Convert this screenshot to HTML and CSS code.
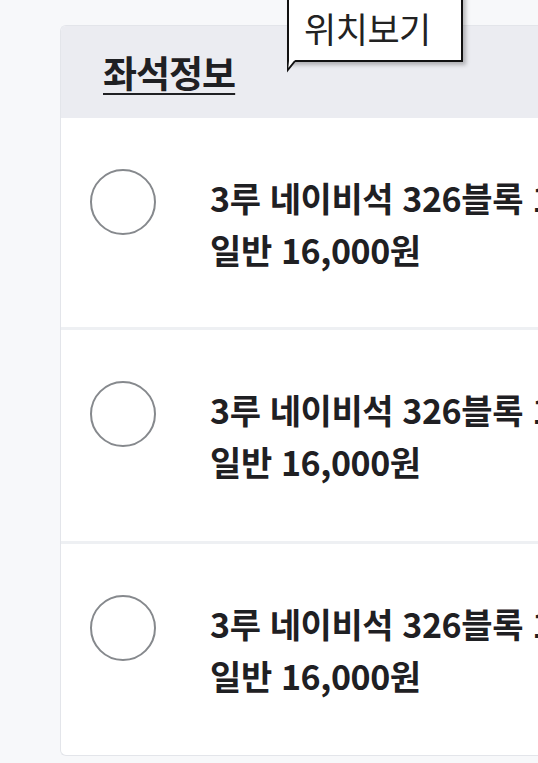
FILE: index.html
```html
<!DOCTYPE html>
<html lang="ko">
<head>
<meta charset="utf-8">
<link rel="stylesheet" href="styles.css">
</head>
<body>
<div class="page">
  <div class="card">
    <div class="card-head">
      <h2 class="title">좌석정보</h2>
    </div>
    <div class="row">
      <span class="radio"></span>
      <div class="info">
        <div class="line">3루 네이비석 326블록 1열 12번</div>
        <div class="line">일반 16,000원</div>
      </div>
    </div>
    <div class="row">
      <span class="radio"></span>
      <div class="info">
        <div class="line">3루 네이비석 326블록 1열 13번</div>
        <div class="line">일반 16,000원</div>
      </div>
    </div>
    <div class="row">
      <span class="radio"></span>
      <div class="info">
        <div class="line">3루 네이비석 326블록 1열 14번</div>
        <div class="line">일반 16,000원</div>
      </div>
    </div>
  </div>
  <div class="tooltip">
    위치보기
    <svg class="tail" width="12" height="14" viewBox="0 0 12 14">
      <polygon points="1,0 9,0 0,12" fill="#fff"/>
      <polyline points="1,0 1,2 0,12 8,2" fill="none" stroke="#111" stroke-width="2"/>
    </svg>
  </div>
</div>
</body>
</html>
```

FILE: styles.css
```css
html, body {
  margin: 0;
  padding: 0;
  background: #f7f8fa;
  font-family: "Noto Sans CJK KR", "Noto Sans", sans-serif;
  color: #1f2023;
  overflow: hidden;
}

.page {
  position: relative;
  width: 538px;
  height: 763px;
  padding: 25px 0 0 60px;
  box-sizing: border-box;
  overflow: hidden;
}

.card {
  width: 520px;
  background: #fff;
  border: 1px solid #e3e5ea;
  border-right: none;
  border-radius: 6px 0 0 6px;
  overflow: hidden;
}

.card-head {
  height: 92px;
  background: #ebecf1;
  display: flex;
  align-items: center;
  padding-left: 42px;
}

.title {
  margin: 0;
  font-size: 37px;
  font-weight: 700;
  line-height: 1;
  text-decoration: underline;
  text-decoration-thickness: 2px;
  text-underline-offset: 5px;
  letter-spacing: -1px;
  color: #1f2023;
}

.row {
  height: 214px;
  border-top: 3px solid #eef0f3;
  display: flex;
  align-items: flex-start;
  padding: 51px 0 0 29px;
  box-sizing: border-box;
}

.card-head + .row {
  border-top: none;
  height: 209px;
}

.radio {
  flex: none;
  width: 62px;
  height: 62px;
  border: 2px solid #86898d;
  border-radius: 50%;
}

.info {
  margin-left: 54px;
  margin-top: 3px;
  white-space: nowrap;
}

.line {
  font-size: 34px;
  font-weight: 700;
  line-height: 52px;
  letter-spacing: -0.4px;
}

.tooltip {
  position: absolute;
  left: 287px;
  top: -10px;
  width: 176px;
  height: 72px;
  box-sizing: border-box;
  background: #fff;
  border: 2px solid #111;
  box-shadow: 3px 3px 4px rgba(0, 0, 0, 0.25);
  font-size: 35px;
  font-weight: 400;
  color: #222;
  display: flex;
  align-items: center;
  justify-content: flex-start;
  padding: 2px 0 0 15px;
  letter-spacing: -0.5px;
}

.tail {
  position: absolute;
  left: -2px;
  bottom: -13px;
}
```
